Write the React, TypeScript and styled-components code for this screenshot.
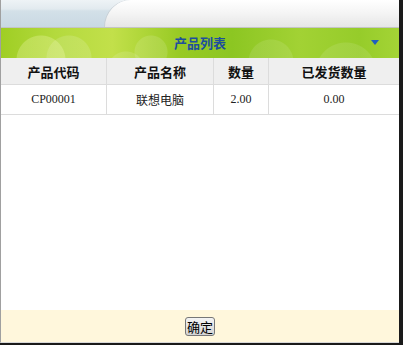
import React from "react";
import styled, { createGlobalStyle } from "styled-components";

const GlobalStyle = createGlobalStyle`
  html, body {
    margin: 0;
    padding: 0;
    background: #1a1a1a;
  }
  body {
    font-family: "Liberation Serif", "Noto Sans CJK SC", serif;
  }
`;

const rows = [{ code: "CP00001", name: "联想电脑", qty: "2.00", sent: "0.00" }];

export default function App() {
  return (
    <>
      <GlobalStyle />
      <Window>
        <TabBar>
          <TabRight />
        </TabBar>
        <Banner>
          <Title>产品列表</Title>
          <Arrow />
        </Banner>
        <Body>
          <Table>
            <thead>
              <tr>
                <Th width={105}>产品代码</Th>
                <Th width={106}>产品名称</Th>
                <Th width={54}>数量</Th>
                <Th>已发货数量</Th>
              </tr>
            </thead>
            <tbody>
              {rows.map((r) => (
                <tr key={r.code}>
                  <Td>{r.code}</Td>
                  <Td cjk>{r.name}</Td>
                  <Td>{r.qty}</Td>
                  <Td>{r.sent}</Td>
                </tr>
              ))}
            </tbody>
          </Table>
        </Body>
        <Footer>
          <OkButton>确定</OkButton>
        </Footer>
      </Window>
    </>
  );
}

const Window = styled.div`
  width: 399px;
  height: 343px;
  display: flex;
  flex-direction: column;
  background: #fff;
  border-left: 1px solid #a0a0a0;
  border-bottom: 1px solid #d8d8d8;
  box-sizing: border-box;
`;

const TabBar = styled.div`
  height: 27px;
  display: flex;
  background: linear-gradient(#eef3f6 0px, #e2eaef 9px, #d3e0e8 11px, #c9d9e3 27px);
  border-bottom: 1px solid #c4c4c4;
`;

const TabRight = styled.div`
  flex: 1;
  margin-left: 104px;
  border-top-left-radius: 26px 27px;
  background: linear-gradient(#ffffff, #f4f4f4 50%, #e6e6e6);
  box-shadow: -1px 0 0 #c8cfd4;
`;

const Banner = styled.div`
  height: 30px;
  position: relative;
  display: flex;
  align-items: center;
  justify-content: center;
  background:
    radial-gradient(circle at 40px 32px, rgba(255, 255, 200, 0.25) 0 24px, transparent 25px),
    radial-gradient(circle at 68px 30px, rgba(255, 255, 255, 0.14) 0 22px, transparent 23px),
    radial-gradient(circle at 150px 24px, rgba(255, 255, 255, 0.12) 0 16px, transparent 17px),
    radial-gradient(circle at 125px 42px, rgba(255, 255, 255, 0.12) 0 18px, transparent 19px),
    radial-gradient(circle at 270px 34px, rgba(255, 255, 255, 0.1) 0 22px, transparent 23px),
    radial-gradient(circle at 345px 45px, rgba(255, 255, 255, 0.1) 0 30px, transparent 31px),
    linear-gradient(90deg, #9fce24 0%, #b4da3e 14%, #c2e04a 28%, #98ca24 45%, #8cc622 58%, #a2d234 75%, #96cc2a 90%, #a4d436 100%);
`;

const Title = styled.span`
  font-family: "Noto Sans CJK SC", sans-serif;
  font-size: 13px;
  font-weight: bold;
  color: #1d4e9e;
  margin-top: -2px;
`;

const Arrow = styled.span`
  position: absolute;
  right: 20px;
  top: 12px;
  width: 0;
  height: 0;
  border-left: 4px solid transparent;
  border-right: 4px solid transparent;
  border-top: 5px solid #1f5fbf;
`;

const Body = styled.div`
  flex: 1;
  background: #fff;
`;

const Table = styled.table`
  width: 100%;
  border-collapse: collapse;
  table-layout: fixed;
`;

const Th = styled.th<{ width?: number }>`
  width: ${(p) => (p.width ? `${p.width}px` : "auto")};
  height: 26px;
  padding: 0;
  background: #efefef;
  border-right: 1px solid #dcdcdc;
  border-bottom: 1px solid #dcdcdc;
  font-family: "Noto Sans CJK SC", sans-serif;
  font-size: 13px;
  font-weight: bold;
  color: #111;
  &:last-child {
    border-right: none;
  }
`;

const Td = styled.td<{ cjk?: boolean }>`
  height: 29px;
  padding: 0;
  text-align: center;
  border-right: 1px solid #dcdcdc;
  border-bottom: 1px solid #dcdcdc;
  font-family: ${(p) =>
    p.cjk ? '"Noto Sans CJK SC", sans-serif' : '"Liberation Serif", "Noto Sans CJK SC", serif'};
  font-size: 12px;
  color: #222;
  &:last-child {
    border-right: none;
  }
`;

const Footer = styled.div`
  height: 32px;
  display: flex;
  align-items: center;
  justify-content: center;
  background: #fff7dc;
`;

const OkButton = styled.button`
  height: 19px;
  padding: 0 1px;
  font-family: "Noto Sans CJK SC", sans-serif;
  font-size: 13px;
  line-height: 15px;
  color: #000;
  background: linear-gradient(#f4f4f4, #d4d4d4);
  border: 1px solid #777;
  border-radius: 3px;
  cursor: pointer;
`;
